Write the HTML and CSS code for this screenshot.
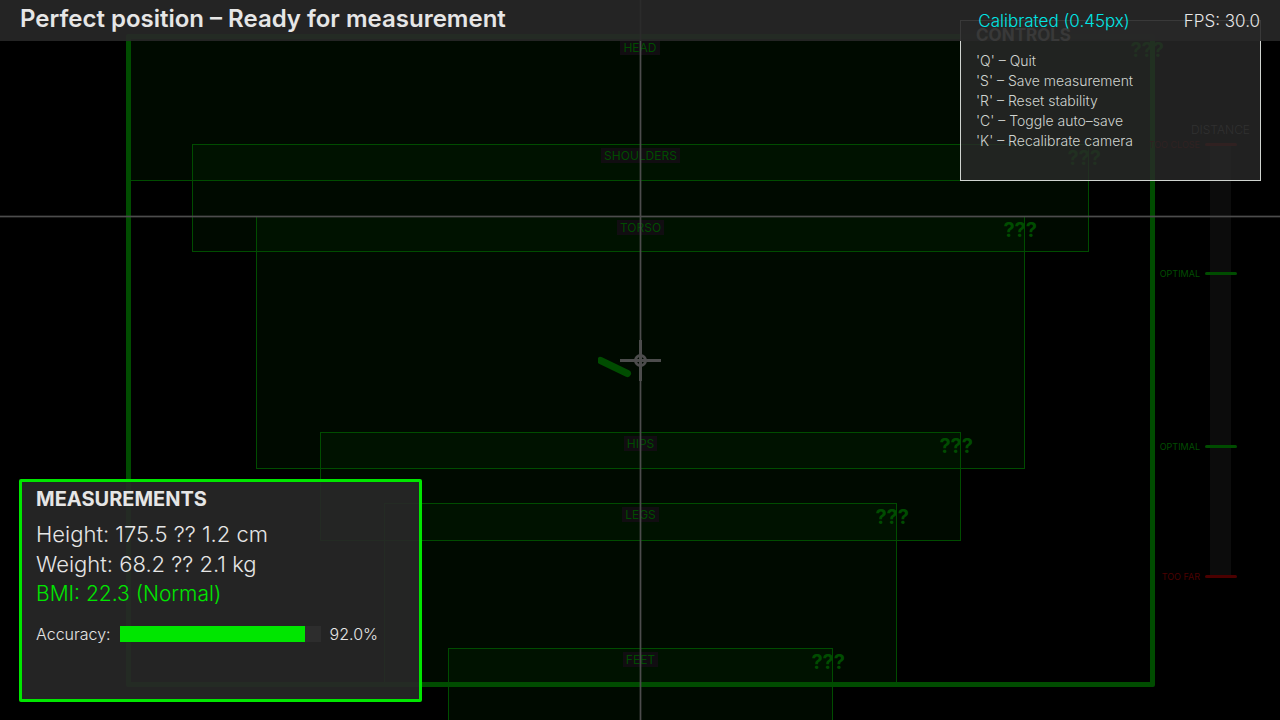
FILE: index.html
```html
<!DOCTYPE html>
<html lang="en">
<head>
<meta charset="utf-8">
<title>Body measurement</title>
<link rel="stylesheet" href="styles.css">
</head>
<body>
<main class="view">
  <section class="scene" aria-label="Camera view">
    <div class="zone zone-head"><span class="zone-name">HEAD</span><span class="zone-state">???</span></div>
    <div class="zone zone-shoulders"><span class="zone-name">SHOULDERS</span><span class="zone-state">???</span></div>
    <div class="zone zone-torso"><span class="zone-name">TORSO</span><span class="zone-state">???</span></div>
    <div class="zone zone-hips"><span class="zone-name">HIPS</span><span class="zone-state">???</span></div>
    <div class="zone zone-legs"><span class="zone-name">LEGS</span><span class="zone-state">???</span></div>
    <div class="zone zone-feet"><span class="zone-name">FEET</span><span class="zone-state">???</span></div>
    <div class="frame"></div>
    <div class="scale">
      <span class="scale-title">DISTANCE</span>
      <div class="mark mark-bad" style="top:0%"><span>TOO CLOSE</span><i></i></div>
      <div class="mark" style="top:30%"><span>OPTIMAL</span><i></i></div>
      <div class="mark" style="top:70%"><span>OPTIMAL</span><i></i></div>
      <div class="mark mark-bad" style="top:100%"><span>TOO FAR</span><i></i></div>
    </div>
    <div class="guide guide-v"></div>
    <div class="guide guide-h"></div>
    <svg class="reticle" viewBox="0 0 84 44" width="84" height="44" aria-hidden="true">
      <path d="M2.500 22.500L29.500 35.500" stroke="#004c00" stroke-width="7" stroke-linecap="round"/>
      <path d="M22 22.500H63M42.500 2V43" stroke="#4c4c4c" stroke-width="3"/>
      <circle cx="42.500" cy="22.500" r="5" fill="none" stroke="#4c4c4c" stroke-width="3"/>
    </svg>
  </section>

  <aside class="controls">
    <h2>CONTROLS</h2>
    <ul>
      <li>'Q' – Quit</li>
      <li>'S' – Save measurement</li>
      <li>'R' – Reset stability</li>
      <li>'C' – Toggle auto–save</li>
      <li>'K' – Recalibrate camera</li>
    </ul>
  </aside>

  <header class="topbar">
    <h1>Perfect position – Ready for measurement</h1>
    <span class="calibration">Calibrated (0.45px)</span>
    <span class="fps">FPS: 30.0</span>
  </header>

  <section class="measurements">
    <h2>MEASUREMENTS</h2>
    <p>Height: 175.5 ?? 1.2 cm</p>
    <p>Weight: 68.2 ?? 2.1 kg</p>
    <p class="good">BMI: 22.3 (Normal)</p>
    <div class="accuracy">
      <label for="accuracy">Accuracy:</label>
      <progress id="accuracy" max="100" value="92"></progress>
      <span>92.0%</span>
    </div>
  </section>
</main>
</body>
</html>
```
FILE: styles.css
```css
* { box-sizing: border-box; }
body {
  margin: 0;
  background: #000;
  color: #e6e6e6;
  font-family: Inter, "Noto Sans", sans-serif;
}
h1, h2, p, ul { margin: 0; padding: 0; }
ul { list-style: none; }

.view { position: relative; height: 100vh; overflow: hidden; }
.scene { position: absolute; inset: 0; color: #004c00; }

.zone {
  position: absolute;
  display: flex;
  justify-content: center;
  align-items: flex-start;
  padding-top: 3px;
  border: 1px solid #004c00;
  background: rgba(0, 76, 0, .13);
}
.zone-head { left: 10%; right: 10%; top: 5%; bottom: calc(75% - 1px); }
.zone-shoulders { left: 15%; right: calc(15% - 1px); top: 20%; bottom: 65%; }
.zone-torso { left: 20%; right: calc(20% - 1px); top: 30%; bottom: calc(35% - 1px); }
.zone-hips { left: 25%; right: calc(25% - 1px); top: 60%; bottom: calc(25% - 1px); }
.zone-legs { left: 30%; right: calc(30% - 1px); top: calc(70% - 1px); bottom: 5%; }
.zone-feet { left: 35%; right: calc(35% - 1px); top: 90%; bottom: -5%; }
.zone-name {
  padding: 0 3px;
  background: #110d11;
  font-size: 12px;
  line-height: 15px;
}
.zone-state {
  position: absolute;
  right: -13px;
  top: 1px;
  font-size: 20px;
  line-height: 24px;
  font-weight: 700;
}

.frame {
  position: absolute;
  inset: calc(5% - 2px) calc(10% - 3px) calc(5% - 3px) calc(10% - 2px);
  border: 5px solid #004c00;
  border-radius: 2px;
}
.guide { position: absolute; background: #4c4c4c; box-shadow: 0 0 0 1px rgba(76, 76, 76, .35); }
.guide-v { left: 50%; top: 0; bottom: 0; width: 1px; }
.guide-h { top: 30%; left: 0; right: 0; height: 1px; }
.reticle { position: absolute; left: calc(50% - 42px); top: calc(50% - 22px); }

.scale {
  position: absolute;
  right: 49px;
  top: 20%;
  bottom: 20%;
  width: 21px;
  background: #0c0c0c;
}
.scale-title {
  position: absolute;
  left: 50%;
  bottom: 100%;
  transform: translateX(-50%);
  padding-bottom: 6px;
  color: #4c4c4c;
  font-size: 12px;
  line-height: 16px;
  font-weight: 300;
}
.mark {
  position: absolute;
  right: -6px;
  display: flex;
  align-items: center;
  gap: 5px;
  height: 12px;
  margin-top: -6px;
  font-size: 9px;
  white-space: nowrap;
}
.mark i { width: 32px; height: 3px; border-radius: 2px; background: currentColor; }
.mark-bad { color: #4c0000; }

.controls {
  position: absolute;
  top: 20px;
  right: 19px;
  width: 301px;
  padding: 2px 15px 29px;
  border: 1px solid #d0d4d0;
  background: rgba(41, 41, 41, .8);
  color: #d0d4d0;
}
.controls h2 { font-size: 17px; line-height: 24px; font-weight: 700; padding-bottom: 4px; }
.controls li { font-size: 14px; line-height: 20px; font-weight: 300; }

.topbar {
  position: relative;
  display: flex;
  align-items: center;
  height: 41px;
  padding: 0 20px 4px;
  background: rgba(40, 40, 40, .9);
}
.topbar h1 { margin-right: auto; font-size: 24px; line-height: 28px; font-weight: 600; }
.topbar span { padding-top: 4px; font-size: 17px; line-height: 20px; font-weight: 300; }
.calibration { color: #00e6e6; margin-right: 54px; }

.measurements {
  position: absolute;
  left: 19px;
  bottom: 18px;
  width: 403px;
  padding: 5px 14px 53px;
  border: 3px solid #00e600;
  border-radius: 2px;
  background: rgba(40, 40, 40, .9);
}
.measurements h2 { font-size: 20px; line-height: 24px; font-weight: 700; padding-bottom: 8px; }
.measurements p { font-size: 22px; line-height: 30px; font-weight: 300; }
.measurements .good { font-size: 21px; color: #00e600; }
.accuracy {
  display: flex;
  align-items: center;
  gap: 9px;
  padding-top: 13px;
  font-size: 16px;
  line-height: 24px;
  font-weight: 300;
}
.accuracy progress {
  appearance: none;
  width: 201px;
  height: 16px;
  border: 0;
  background: #2d2d2d;
}
.accuracy progress::-webkit-progress-bar { background: #2d2d2d; }
.accuracy progress::-webkit-progress-value { background: #00e600; }
```
